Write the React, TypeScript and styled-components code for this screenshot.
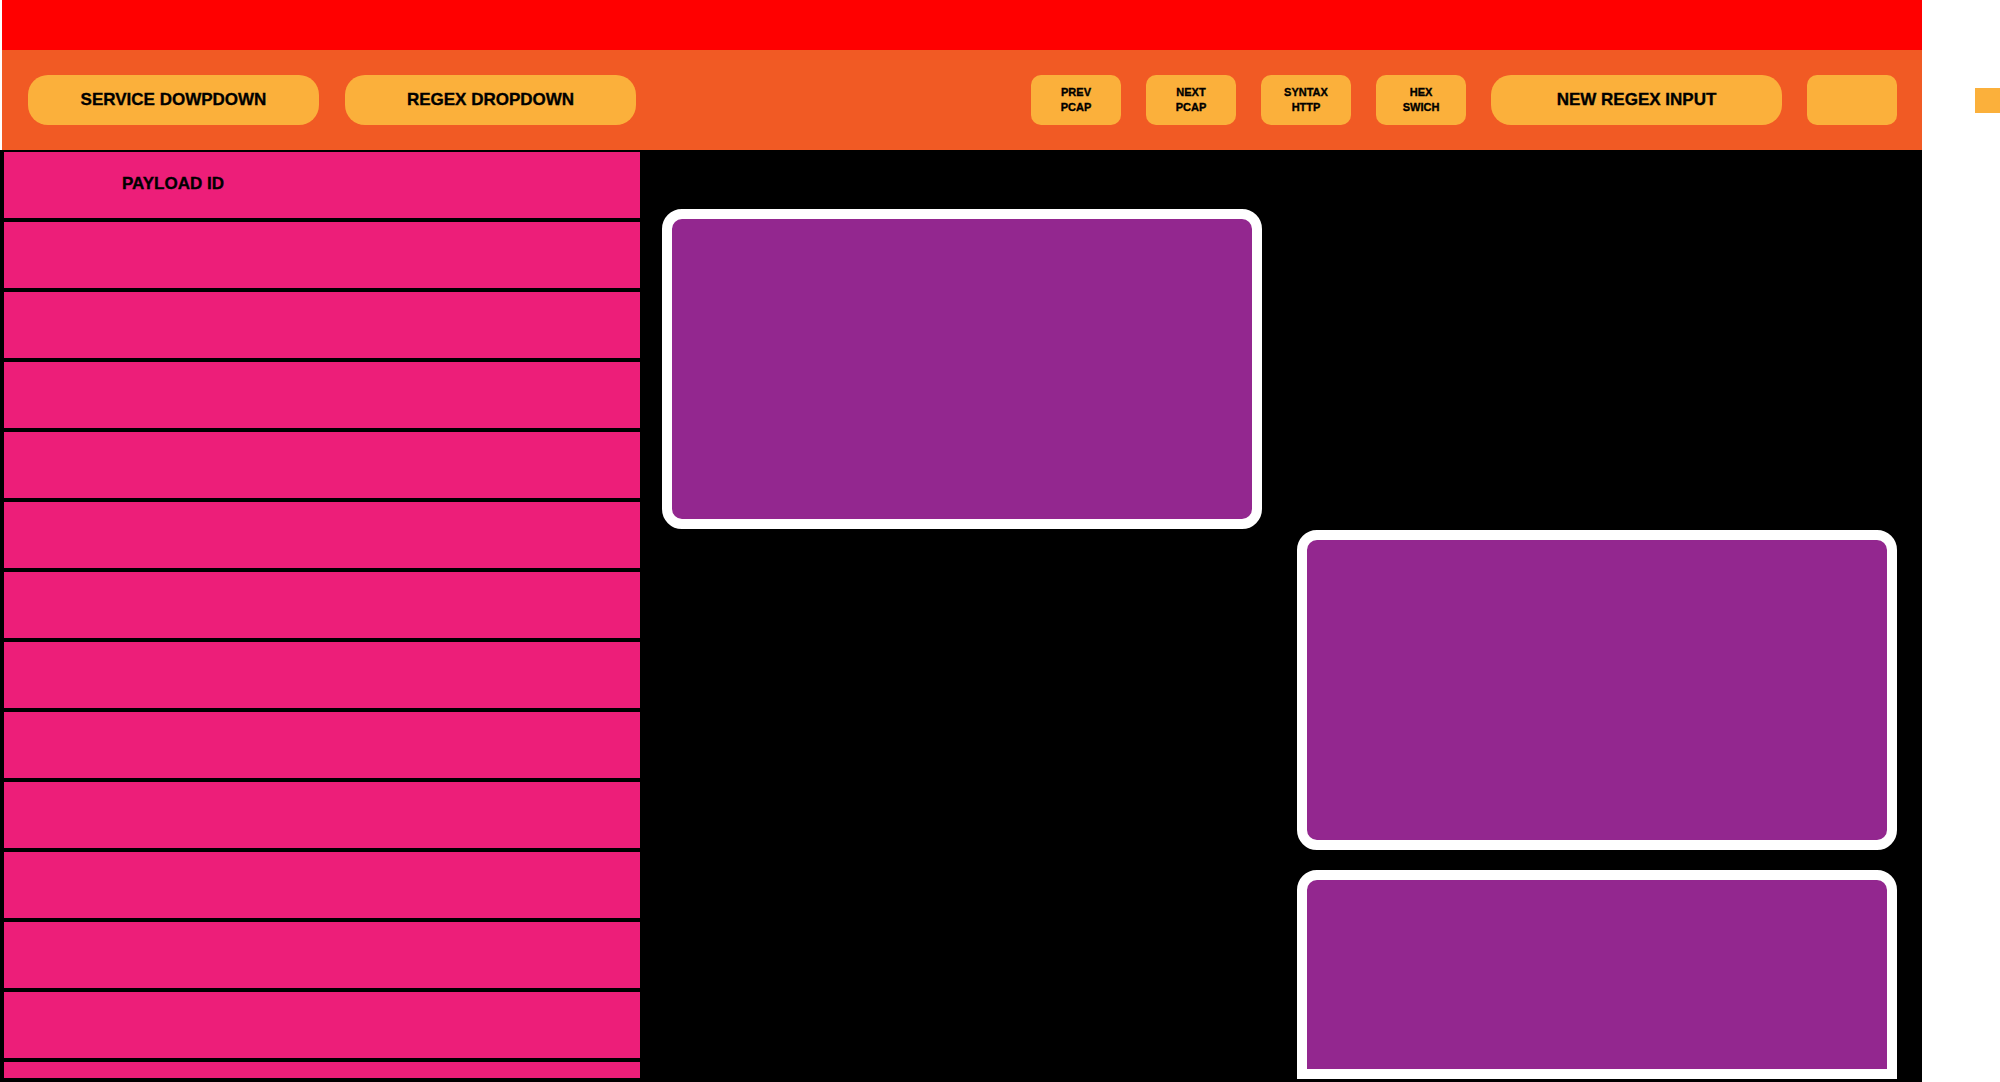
import React from 'react';
import styled, { createGlobalStyle } from 'styled-components';

const GlobalStyle = createGlobalStyle`
  html, body {
    margin: 0;
    padding: 0;
    background: #fff;
    overflow: hidden;
  }

  body {
    font-family: "Liberation Sans", Arial, sans-serif;
  }
`;

const Page = styled.div`
  display: flex;
  align-items: flex-start;
  width: 2000px;
  height: 1082px;
  overflow: hidden;
`;

const Frame = styled.div`
  display: flex;
  flex-direction: column;
  flex-shrink: 0;
  width: 1922px;
  height: 1082px;
`;

const TopStrip = styled.div`
  height: 50px;
  margin-left: 2px;
  background-color: #ff0000;
`;

const Toolbar = styled.div`
  display: flex;
  align-items: center;
  justify-content: space-between;
  height: 100px;
  margin-left: 2px;
  padding: 0 25px 0 26px;
  background-color: #f15a24;
`;

const Group = styled.div<{ $gap: number }>`
  display: flex;
  align-items: center;
  gap: ${props => props.$gap}px;
`;

const Button = styled.button<{ $wide?: boolean }>`
  height: 50px;
  width: ${props => (props.$wide ? '291px' : '90px')};
  padding: 0;
  border: none;
  border-radius: ${props => (props.$wide ? '20px' : '10px')};
  background-color: #fbb03b;
  color: #000;
  font-family: "Liberation Sans", Arial, sans-serif;
  font-weight: 700;
  font-size: ${props => (props.$wide ? '17px' : '11px')};
  line-height: ${props => (props.$wide ? '20px' : '15px')};
  -webkit-text-stroke: 0.35px #000;
  text-align: center;
  cursor: pointer;
`;

const Body = styled.div`
  display: flex;
  flex: 1;
  min-height: 0;
  background-color: #000;
`;

const PayloadList = styled.div`
  display: flex;
  flex-direction: column;
  gap: 4px;
  flex-shrink: 0;
  width: 640px;
  box-sizing: border-box;
  border-style: solid;
  border-color: #000;
  border-width: 2px 0 4px 4px;
  overflow: hidden;
`;

const PayloadRow = styled.div`
  display: flex;
  align-items: center;
  flex-shrink: 0;
  height: 66px;
  padding: 0 0 3px 24px;
  box-sizing: border-box;
  background-color: #ed1e79;
`;

const PayloadCell = styled.span`
  width: 290px;
  text-align: center;
  color: #000;
  font-weight: 700;
  font-size: 17px;
  -webkit-text-stroke: 0.35px #000;
`;

const Conversation = styled.div`
  display: flex;
  flex-direction: column;
  flex: 1;
  padding: 59px 25px 0 22px;
  overflow: hidden;
`;

const Message = styled.div<{ $side: 'client' | 'server'; $top: number; $cut?: boolean }>`
  flex-shrink: 0;
  box-sizing: border-box;
  width: 600px;
  height: ${props => (props.$cut ? '209px' : '320px')};
  margin-top: ${props => props.$top}px;
  align-self: ${props => (props.$side === 'client' ? 'flex-start' : 'flex-end')};
  background-color: #93278f;
  border: 10px solid #fff;
  border-radius: ${props => (props.$cut ? '20px 20px 0 0' : '20px')};
`;

const StrayTab = styled.div`
  flex-shrink: 0;
  width: 25px;
  height: 25px;
  margin: 88px 0 0 53px;
  background-color: #fbb03b;
`;

const rows = Array.from({ length: 14 }, (_, i) => i);

export default function App() {
  return (
    <>
      <GlobalStyle />
      <Page>
        <Frame>
          <TopStrip />
          <Toolbar>
            <Group $gap={26}>
              <Button $wide>SERVICE DOWPDOWN</Button>
              <Button $wide>REGEX DROPDOWN</Button>
            </Group>
            <Group $gap={25}>
              <Button>
                PREV
                <br />
                PCAP
              </Button>
              <Button>
                NEXT
                <br />
                PCAP
              </Button>
              <Button>
                SYNTAX
                <br />
                HTTP
              </Button>
              <Button>
                HEX
                <br />
                SWICH
              </Button>
              <Button $wide>NEW REGEX INPUT</Button>
              <Button />
            </Group>
          </Toolbar>
          <Body>
            <PayloadList>
              {rows.map(i => (
                <PayloadRow key={i}>{i === 0 && <PayloadCell>PAYLOAD ID</PayloadCell>}</PayloadRow>
              ))}
            </PayloadList>
            <Conversation>
              <Message $side="client" $top={0} />
              <Message $side="server" $top={1} />
              <Message $side="server" $top={20} $cut />
            </Conversation>
          </Body>
        </Frame>
        <StrayTab />
      </Page>
    </>
  );
}
